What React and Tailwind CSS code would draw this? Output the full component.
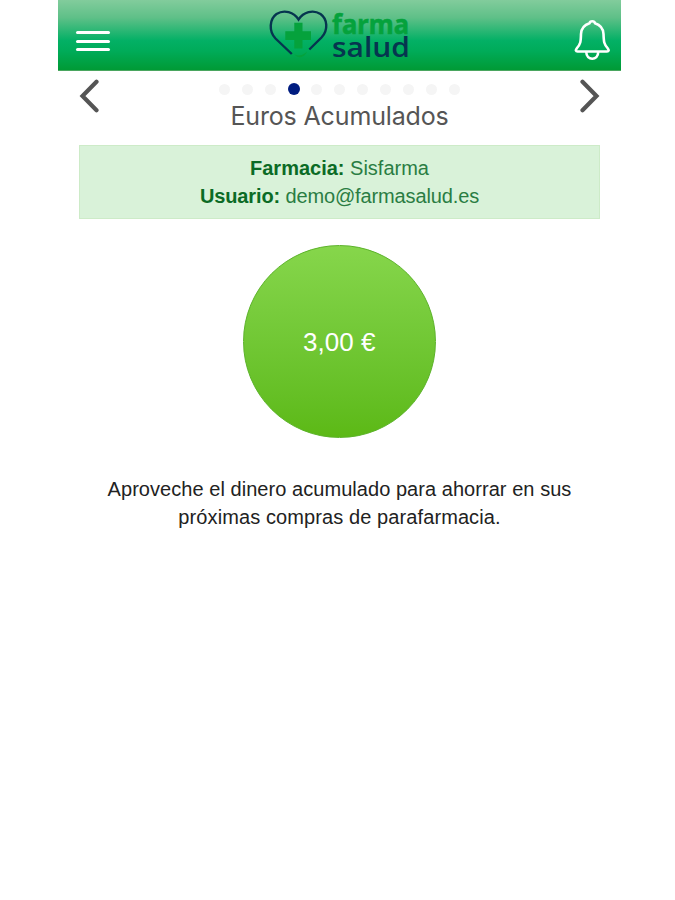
const pages = Array.from({ length: 11 }, (_, i) => i);

function Logo() {
  return (
    <svg width="150" height="62" viewBox="265 1 150 62" className="block" aria-label="farma salud">
      <path
        d="M291.800 54L275.500 38.500C268.500 31 269.500 19 276.500 14C284 9.200 294 12 298.500 19.500C303.500 12 313 9.200 320.500 14C327.500 19 328.500 30 321.500 37.500L309.300 49.500"
        fill="none"
        stroke="#06354f"
        strokeWidth="2.4"
      />
      <path d="M294.300 22.700H302.500V31.300H311V40H302.500V48.500H294.300V40H285.300V31.300H294.300Z" fill="#05a23c" />
      <path d="M294.500 54C298 57 303 55.500 307 51.500C305 57 298 60 294.500 54Z" fill="#05a23c" />
      <text x="332" y="34.200" textLength="77" lengthAdjust="spacingAndGlyphs" fontFamily="'Noto Sans', sans-serif" fontWeight="700" fontSize="26" fill="#05a23c" stroke="#05a23c" strokeWidth="0.500">farma</text>
      <text x="332" y="56.700" textLength="78" lengthAdjust="spacingAndGlyphs" fontFamily="'Open Sans', sans-serif" fontWeight="600" fontSize="27.500" fill="#06354f">salud</text>
    </svg>
  );
}

function Chevron({ flip }) {
  return (
    <svg width="21" height="34" viewBox="0 0 21 34" className={flip ? "-scale-x-100" : ""} fill="none" stroke="#555" strokeWidth="4.200" strokeLinecap="round">
      <path d="M17.500 2.800L3.500 17L17.500 31.200" />
    </svg>
  );
}

export default function App() {
  return (
    <div className="h-[900px] w-[675px] overflow-hidden bg-white font-['Liberation_Sans',Arial,sans-serif]">
      <main className="ml-[58px] w-[563px]">
        <header className="flex h-[71px] items-start justify-between border-b border-[#4aa660] bg-[linear-gradient(180deg,#82cc9c_0%,#5fc088_25%,#03b065_58%,#00ac5a_72%,#009a35_100%)] pl-[18px] pr-[11px]">
          <div className="mt-[31px] flex w-[34px] flex-col gap-[5.500px]">
            <i className="h-[3px] rounded-full bg-white" />
            <i className="h-[3px] rounded-full bg-white" />
            <i className="h-[3px] rounded-full bg-white" />
          </div>
          <div className="mr-[4px] mt-px">
            <Logo />
          </div>
          <svg className="mt-[18px]" width="36" height="44" viewBox="574 18 36 44" fill="none" stroke="#fff" strokeWidth="2.600" strokeLinejoin="round">
            <path d="M589.500 23.300C590 20.500 594.500 20.500 595 23.300C600.500 25 603.200 29 603.500 34C603.800 42 604 44 607.500 48C609.500 50.500 608.500 51.500 607 51.500H577.500C576 51.500 575 50.500 577 48C580.500 44 580.800 42 581 34C581.300 29 584 25 589.500 23.300Z" />
            <path d="M586.300 52C586.300 61 598.200 61 598.200 52" />
          </svg>
        </header>

        <nav className="flex items-start justify-between pl-[21px] pr-[21px] pt-[8px]">
          <Chevron />
          <div className="flex flex-col items-center pt-[4px]">
            <div className="flex gap-[11px]">
              {pages.map((i) => (
                <span key={i} className="flex size-[12px] items-center justify-center">
                  <i className={`rounded-full ${i === 3 ? "size-[12px] bg-[#001c80]" : "size-[11px] bg-[#f5f5f5]"}`} />
                </span>
              ))}
            </div>
            <h1 className="mt-[4px] whitespace-nowrap font-['Inter',sans-serif] text-[25px] leading-[34px] tracking-[-0.150px] text-[#555]">Euros Acumulados</h1>
          </div>
          <Chevron flip />
        </nav>

        <section className="ml-[21px] mt-[12px] h-[74px] w-[521px] border border-[#cdebc8] bg-[#d9f2d9] pt-[8px] text-center text-[20px] leading-[28.500px] text-[#2a7d43]">
          <p><b className="text-[#0b6b25]">Farmacia:</b> Sisfarma</p>
          <p className="-mt-px tracking-[-0.130px]"><b className="text-[#0b6b25]">Usuario:</b> demo@farmasalud.es</p>
        </section>

        <div className="ml-[184.500px] mt-[25.500px] flex size-[193.500px] items-center justify-center rounded-full border border-[#5cb32a] bg-linear-to-b from-[#86d64b] to-[#5cb915] pt-[2px] text-[26px] text-white">
          3,00 €
        </div>

        <div className="mt-[36.500px] text-center text-[20px] leading-[28.500px] tracking-[0.050px] text-[#222]">
          <p>Aproveche el dinero acumulado para ahorrar en sus</p>
          <p className="tracking-[0.100px]">próximas compras de parafarmacia.</p>
        </div>
      </main>
    </div>
  );
}
